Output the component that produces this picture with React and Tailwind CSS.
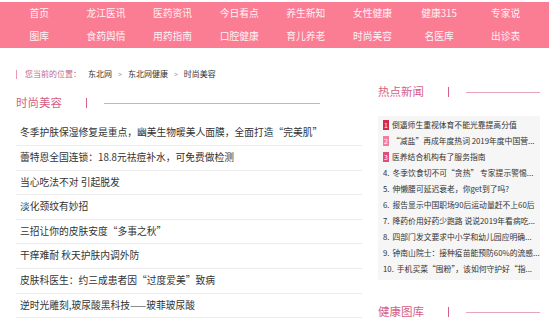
import React from "react";

const navItems = [
  "首页", "龙江医讯", "医药资讯", "今日看点", "养生新知", "女性健康", "健康315", "专家说",
  "图库", "食药舆情", "用药指南", "口腔健康", "育儿养老", "时尚美容", "名医库", "出诊表",
];

const articles = [
  "冬季护肤保湿修复是重点，幽美生物暖美人面膜，全面打造“完美肌”",
  "蕾特恩全国连锁：18.8元祛痘补水，可免费做检测",
  "当心吃法不对 引起脱发",
  "淡化颈纹有妙招",
  "三招让你的皮肤安度“多事之秋”",
  "干痒难耐 秋天护肤内调外防",
  "皮肤科医生：约三成患者因“过度爱美”致病",
  "逆时光雕刻,玻尿酸黑科技——玻菲玻尿酸",
];

// titles are already cut as the site shows them
const hotNews = [
  "倒逼师生重视体育不能光靠提高分值",
  "“减盐”再成年度热词 2019年度中国营...",
  "医养结合机构有了服务指南",
  "冬季饮食切不可“贪热” 专家提示警惕...",
  "伸懒腰可延迟衰老，你get到了吗?",
  "报告显示中国职场90后运动量赶不上60后",
  "降药价用好药少跑路 说说2019年看病吃...",
  "四部门发文要求中小学和幼儿园应明确...",
  "钟南山院士：接种疫苗能预防60%的流感...",
  "手机买菜“囤粉”，该如何守护好“指...",
];

const badgeColors = ["bg-[#d02a55]", "bg-[#f27da0]", "bg-[#e04d7c]"];

function SectionTitle({ title, lineClass }) {
  return (
    <div className="flex items-center h-[16px]">
      <span className="w-[70px] text-[11.5px] leading-none text-[#d55f87]">{title}</span>
      <span className="w-px h-[10px] bg-[#d55f87]" />
      <span className={`ml-[17px] h-px bg-[#e8a6bb] ${lineClass}`} />
    </div>
  );
}

export default function App() {
  return (
    <div className="w-[549px] h-[323px] bg-white overflow-hidden font-['Noto_Sans_CJK_SC',sans-serif]">
      {/* top nav */}
      <div className="h-[2px]" />
      <div className="bg-[#fb7d94] h-[46px] pl-[6px] pr-[10px] pt-[1px] grid grid-cols-8">
        {navItems.map((item, idx) => (
          <div
            key={idx}
            className="h-[22px] flex items-center justify-center text-[9.75px] leading-none text-[#fff2f5]"
          >
            {item}
          </div>
        ))}
      </div>

      {/* breadcrumb */}
      <div className="mt-[20px] h-[12px] pl-[16px] flex items-center text-[8px] leading-none">
        <span className="w-px h-[9px] bg-[#e79ab2]" />
        <span className="ml-[8px] text-[#c4678a]">您当前的位置：</span>
        <span className="ml-[7px] text-[#333]">东北网</span>
        <span className="mx-[6px] text-[#999] text-[7px]">&gt;</span>
        <span className="text-[#333]">东北网健康</span>
        <span className="mx-[6px] text-[#999] text-[7px]">&gt;</span>
        <span className="text-[#333]">时尚美容</span>
      </div>

      <div className="flex pl-[16px]">
        {/* main column */}
        <div className="w-[346px] mt-[15px]">
          <SectionTitle title="时尚美容" lineClass="w-[216px]" />
          <div className="mt-[10.5px]">
            {articles.map((text, idx) => (
              <div
                key={idx}
                className="h-[24.6px] pl-[4px] flex items-center border-b border-[#ececec] text-[9.75px] leading-none text-[#333]"
              >
                {text}
              </div>
            ))}
          </div>
        </div>

        {/* aside */}
        <div className="ml-[16px] w-[162px] mt-[4px]">
          <SectionTitle title="热点新闻" lineClass="flex-1" />
          <div className="mt-[16px] bg-[#f6f6f6] pt-[1px] pb-[3px] pl-[5px] pr-[2px]">
            {hotNews.map((text, idx) => (
              <div
                key={idx}
                className="h-[16px] flex items-center text-[7.8px] leading-none text-[#333] whitespace-nowrap"
              >
                {idx < 3 ? (
                  <span
                    className={`shrink-0 w-[6px] h-[10px] mr-[3px] flex items-center justify-center text-[7px] text-white ${badgeColors[idx]}`}
                  >
                    {idx + 1}
                  </span>
                ) : (
                  <span className="shrink-0 mr-[3px]">{idx + 1}.</span>
                )}
                <span>{text}</span>
              </div>
            ))}
          </div>
          <div className="mt-[24px]">
            <SectionTitle title="健康图库" lineClass="flex-1" />
          </div>
        </div>
      </div>
    </div>
  );
}
